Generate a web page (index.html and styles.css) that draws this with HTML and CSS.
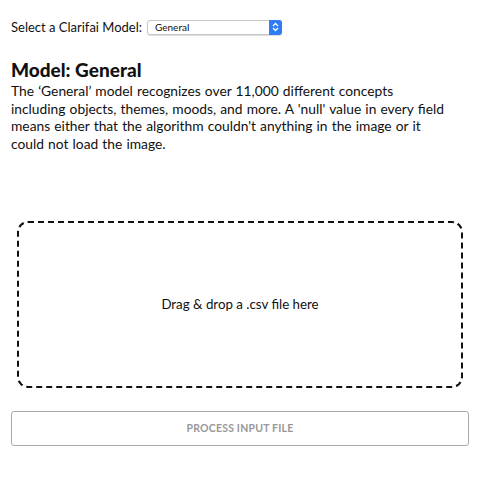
FILE: index.html
```html
<!DOCTYPE html>
<html>
<head>
<meta charset="utf-8">
<link rel="stylesheet" href="styles.css">
</head>
<body>
<div class="page">
  <div class="model-row">
    <span class="label">Select a Clarifai Model:</span>
    <div class="select">
      <span class="select-text">General</span>
      <span class="stepper">
        <svg width="7" height="10" viewBox="0 0 7 10"><path d="M1 4 L3.5 1.5 L6 4" fill="none" stroke="#fff" stroke-width="1.3"/><path d="M1 6 L3.5 8.5 L6 6" fill="none" stroke="#fff" stroke-width="1.3"/></svg>
      </span>
    </div>
  </div>
  <h2 class="title">Model: General</h2>
  <p class="desc">The ‘General’ model recognizes over 11,000 different concepts<br>including objects, themes, moods, and more. A 'null' value in every field<br>means either that the algorithm couldn't anything in the image or it<br>could not load the image.</p>
  <div class="dropzone">Drag &amp; drop a .csv file here</div>
  <button class="process">PROCESS INPUT FILE</button>
</div>
</body>
</html>
```
FILE: styles.css
```css
* { box-sizing: border-box; }
body {
  margin: 0;
  font-family: "Lato", sans-serif;
  color: #111;
  background: #fff;
}
.page {
  padding: 19px 11px 0 11px;
  display: flex;
  flex-direction: column;
}
.model-row {
  display: flex;
  align-items: center;
  gap: 5px;
  height: 16px;
}
.label {
  font-size: 13px;
}
.select {
  width: 135px;
  height: 15px;
  border: 1px solid #c8c8c8;
  border-radius: 3px;
  display: flex;
  align-items: center;
  justify-content: space-between;
  padding-left: 7px;
  box-shadow: 0 0.5px 1px rgba(0,0,0,0.15);
}
.select-text {
  font-size: 10px;
}
.stepper {
  width: 13px;
  height: 15px;
  margin-right: -1px;
  background: #2f7cf6;
  border-radius: 0 3px 3px 0;
  display: flex;
  align-items: center;
  justify-content: center;
}
.title {
  margin: 24px 0 0 0;
  font-size: 19px;
  font-weight: 900;
  line-height: 22px;
}
.desc {
  margin: 1px 0 0 0;
  font-size: 13.8px;
  line-height: 17.7px;
  word-spacing: 0.6px;
}
.dropzone {
  margin: 68px 6px 0 6px;
  height: 167px;
  border: 2px dashed #111;
  border-radius: 11px;
  display: flex;
  align-items: center;
  justify-content: center;
  font-size: 13.3px;
}
.process {
  margin-top: 23px;
  height: 35px;
  width: 458px;
  border: 1.5px solid #aaa;
  border-radius: 3px;
  background: #fff;
  font-family: inherit;
  font-size: 10.5px;
  font-weight: 700;
  color: #999;
  letter-spacing: 0.2px;
}
```
